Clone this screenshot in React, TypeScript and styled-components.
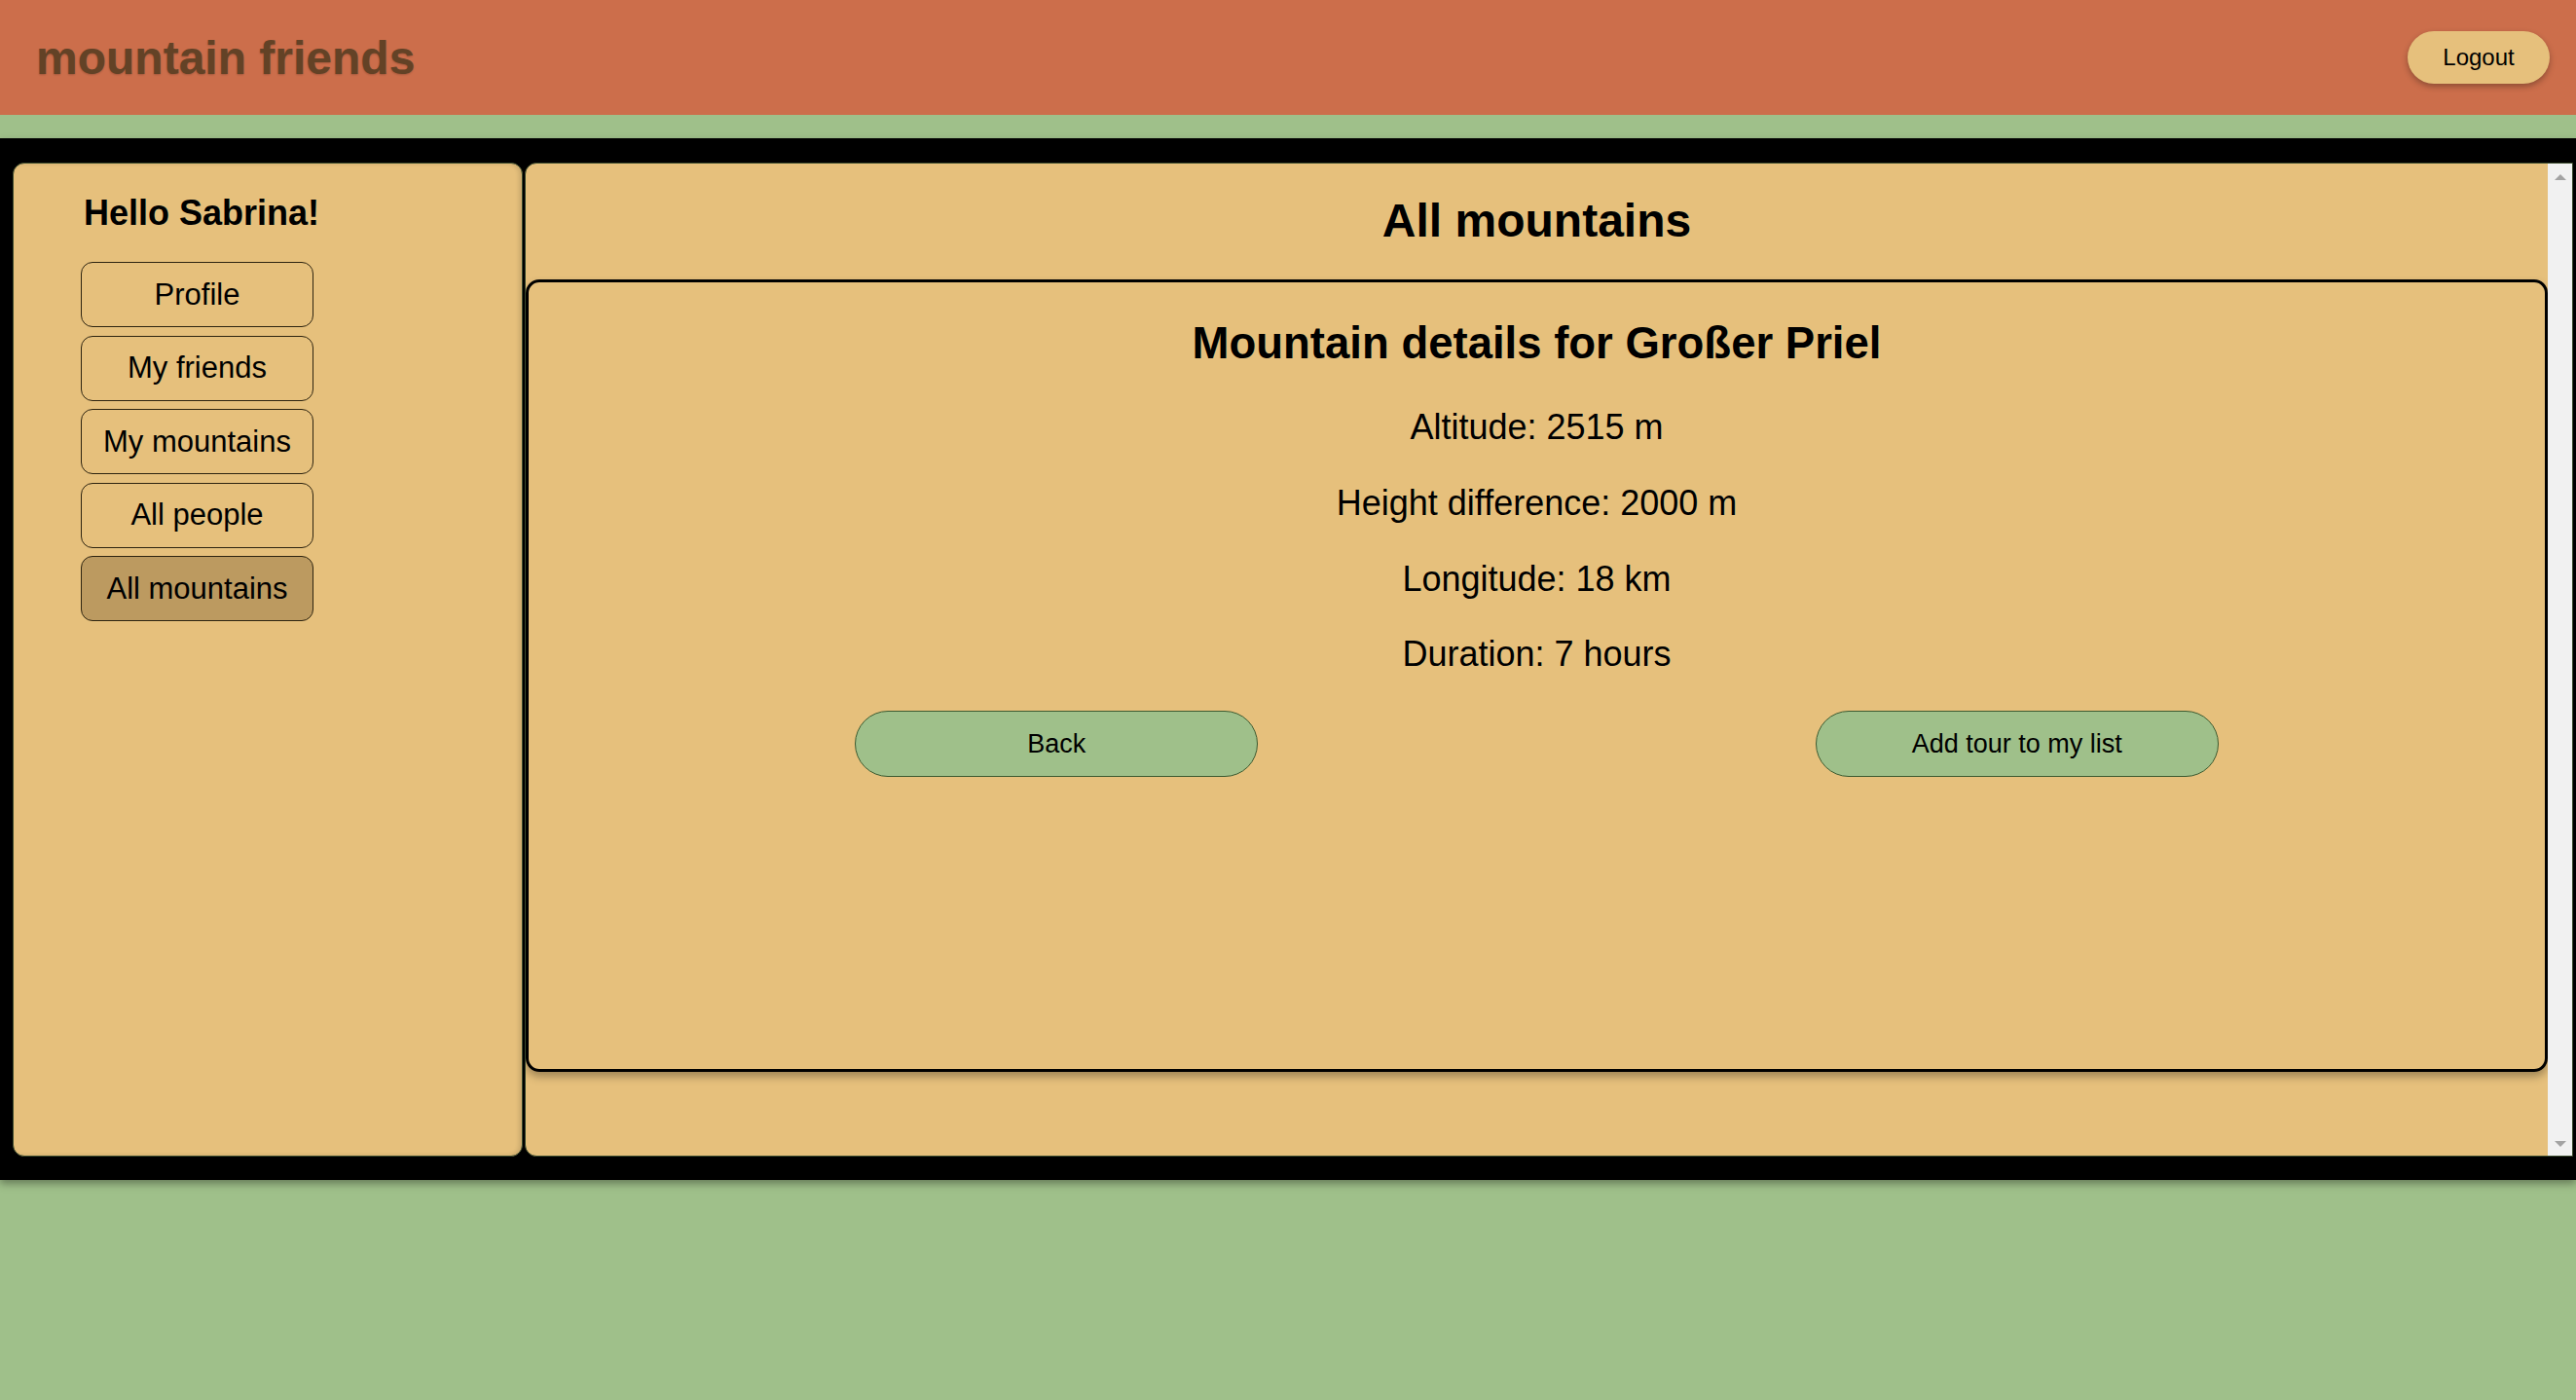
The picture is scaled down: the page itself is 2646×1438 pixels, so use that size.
import React from "react";
import styled, { createGlobalStyle } from "styled-components";

const GlobalStyle = createGlobalStyle`
  html, body {
    margin: 0;
    padding: 0;
  }
  body {
    background: #9fc08a;
    font-family: "Liberation Sans", Arial, sans-serif;
    color: #000;
    min-height: 1438px;
  }
  * { box-sizing: border-box; }
`;

const Header = styled.header`
  height: 118px;
  background: #cc6e4b;
  display: flex;
  align-items: center;
  justify-content: space-between;
  padding: 0 27px 0 37px;
`;

const Brand = styled.h1`
  margin: 0;
  font-size: 48px;
  font-weight: 700;
  color: #634226;
  text-shadow: 0 1px 2px rgba(0, 0, 0, 0.2);
`;

const LogoutButton = styled.button`
  width: 146px;
  height: 54px;
  border: none;
  border-radius: 27px;
  background: #e6c07c;
  font-family: inherit;
  font-size: 24px;
  color: #000;
  box-shadow: 0 3px 6px rgba(0, 0, 0, 0.3);
  cursor: pointer;
`;

const Main = styled.main`
  margin-top: 24px;
  background: #000;
  padding: 25px 3px 24px 13px;
  display: grid;
  grid-template-columns: 524px 1fr;
  gap: 2px;
  height: 1070px;
  box-shadow: 0 4px 8px rgba(0, 0, 0, 0.35);
`;

const Sidebar = styled.aside`
  background: #e6c07c;
  border: 1px solid #3a4a2c;
  border-radius: 12px;
  padding: 30px 0 0 69px;
  display: flex;
  flex-direction: column;
  align-items: flex-start;
  box-shadow: inset -3px 0 4px rgba(0, 0, 0, 0.12);
`;

const Greeting = styled.h2`
  margin: 0 0 30px 3px;
  font-size: 36px;
  line-height: 41px;
  font-weight: 700;
`;

const NavList = styled.nav`
  display: flex;
  flex-direction: column;
  gap: 8.5px;
`;

const NavButton = styled.button<{ $active?: boolean }>`
  width: 239px;
  height: 67px;
  border: 1px solid #2e2410;
  border-radius: 12px;
  background: ${(p) => (p.$active ? "#bc9a60" : "transparent")};
  font-family: inherit;
  font-size: 31px;
  color: #000;
  cursor: pointer;
  padding: 0;
`;

const Content = styled.section`
  background: #e6c07c;
  border: 1px solid #3a4a2c;
  border-radius: 12px 0 0 12px;
  overflow: hidden;
  display: grid;
  grid-template-columns: 1fr 25px;
`;

const ContentScroll = styled.div`
  min-width: 0;
`;

const ScrollTrack = styled.div`
  background: #f1f1f1;
  display: flex;
  flex-direction: column;
  justify-content: space-between;
  align-items: center;
  padding: 11px 0 9px;
`;

const ScrollArrow = styled.span<{ $down?: boolean }>`
  width: 0;
  height: 0;
  border-left: 6px solid transparent;
  border-right: 6px solid transparent;
  ${(p) =>
    p.$down
      ? "border-top: 6px solid #a3a3a3;"
      : "border-bottom: 6px solid #a3a3a3;"}
`;

const PageTitle = styled.h1`
  margin: 31px 0 33px;
  text-align: center;
  font-size: 48px;
  line-height: 55px;
  font-weight: 700;
`;

const DetailCard = styled.article`
  margin: 0;
  height: 814px;
  border: 3px solid #000;
  border-radius: 14px;
  box-shadow: 0 5px 8px rgba(0, 0, 0, 0.3);
  padding-top: 37px;
  text-align: center;
`;

const CardTitle = styled.h2`
  margin: 0 0 39px;
  font-size: 45.5px;
  line-height: 52px;
  font-weight: 700;
`;

const DetailLine = styled.p`
  margin: 0 0 36.3px;
  font-size: 36px;
  line-height: 41.5px;

  &:last-of-type {
    margin-bottom: 37.5px;
  }
`;

const ActionRow = styled.div`
  display: flex;
  justify-content: space-around;
  padding: 0 49px;
`;

const PillButton = styled.button`
  width: 414px;
  height: 68px;
  border: 1px solid #3d5a30;
  border-radius: 34px;
  background: #9fc08a;
  font-family: inherit;
  font-size: 27px;
  color: #000;
  cursor: pointer;
`;

const navItems = ["Profile", "My friends", "My mountains", "All people", "All mountains"];

const details = [
  "Altitude: 2515 m",
  "Height difference: 2000 m",
  "Longitude: 18 km",
  "Duration: 7 hours",
];

export default function App() {
  return (
    <>
      <GlobalStyle />
      <Header>
        <Brand>mountain friends</Brand>
        <LogoutButton>Logout</LogoutButton>
      </Header>
      <Main>
        <Sidebar>
          <Greeting>Hello Sabrina!</Greeting>
          <NavList>
            {navItems.map((item) => (
              <NavButton key={item} $active={item === "All mountains"}>
                {item}
              </NavButton>
            ))}
          </NavList>
        </Sidebar>
        <Content>
          <ContentScroll>
            <PageTitle>All mountains</PageTitle>
            <DetailCard>
              <CardTitle>Mountain details for Großer Priel</CardTitle>
              {details.map((d) => (
                <DetailLine key={d}>{d}</DetailLine>
              ))}
              <ActionRow>
                <PillButton>Back</PillButton>
                <PillButton>Add tour to my list</PillButton>
              </ActionRow>
            </DetailCard>
          </ContentScroll>
          <ScrollTrack>
            <ScrollArrow />
            <ScrollArrow $down />
          </ScrollTrack>
        </Content>
      </Main>
    </>
  );
}
